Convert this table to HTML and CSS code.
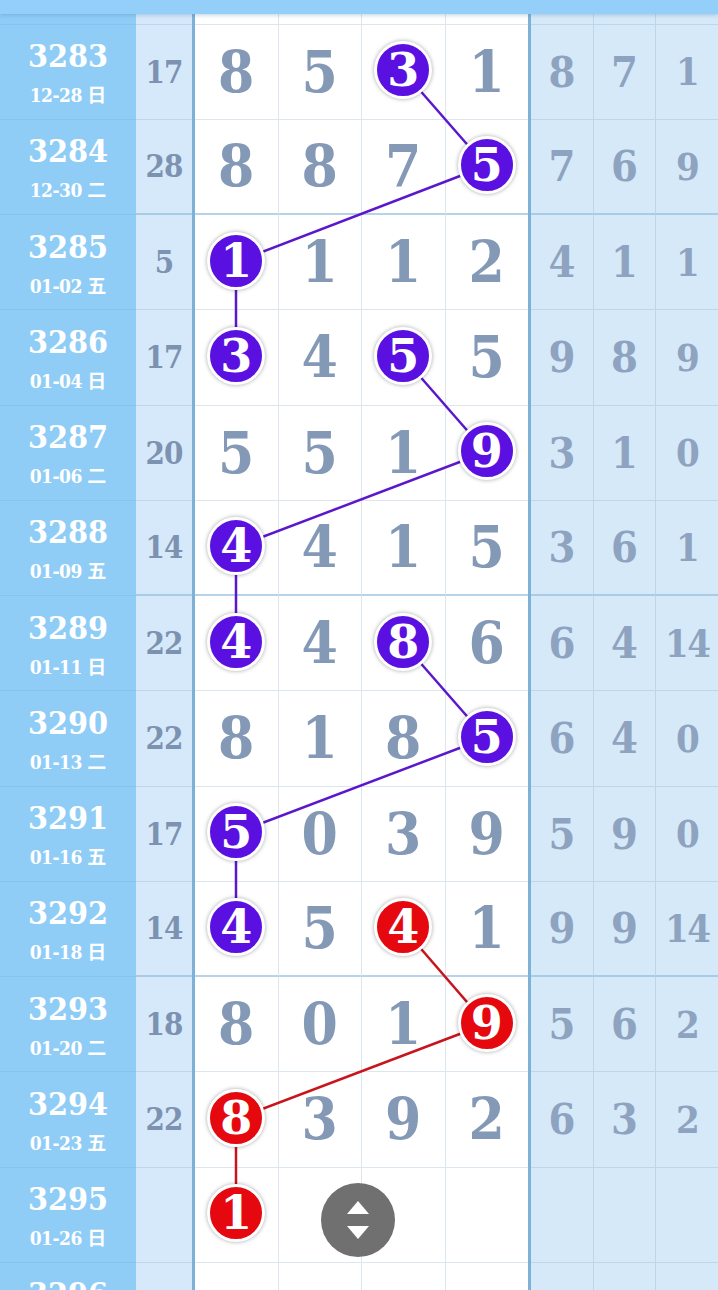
FILE: index.html
```html
<!DOCTYPE html>
<html lang="zh-CN">
<head>
  <meta charset="UTF-8">
  <meta name="viewport" content="width=device-width, initial-scale=1.0">
  <title>走势图</title>
  <link rel="stylesheet" href="styles.css">
</head>
<body>
  <div class="topbar"></div>

  <div class="board">
    <div class="row stub">
      <div class="period"></div><div class="sum"></div>
      <div class="main"><span></span><span></span><span></span><span></span></div>
      <div class="side"><span></span><span></span><span></span></div>
    </div>

    <div class="row">
      <div class="period"><b>3283</b><small>12-28 <i>日</i></small></div>
      <div class="sum">17</div>
      <div class="main"><span>8</span><span>5</span><span><em class="ball">3</em></span><span>1</span></div>
      <div class="side"><span>8</span><span>7</span><span>1</span></div>
    </div>
    <div class="row group-end">
      <div class="period"><b>3284</b><small>12-30 <i>二</i></small></div>
      <div class="sum">28</div>
      <div class="main"><span>8</span><span>8</span><span>7</span><span><em class="ball">5</em></span></div>
      <div class="side"><span>7</span><span>6</span><span>9</span></div>
    </div>
    <div class="row">
      <div class="period"><b>3285</b><small>01-02 <i>五</i></small></div>
      <div class="sum">5</div>
      <div class="main"><span><em class="ball">1</em></span><span>1</span><span>1</span><span>2</span></div>
      <div class="side"><span>4</span><span>1</span><span>1</span></div>
    </div>
    <div class="row">
      <div class="period"><b>3286</b><small>01-04 <i>日</i></small></div>
      <div class="sum">17</div>
      <div class="main"><span><em class="ball">3</em></span><span>4</span><span><em class="ball">5</em></span><span>5</span></div>
      <div class="side"><span>9</span><span>8</span><span>9</span></div>
    </div>
    <div class="row">
      <div class="period"><b>3287</b><small>01-06 <i>二</i></small></div>
      <div class="sum">20</div>
      <div class="main"><span>5</span><span>5</span><span>1</span><span><em class="ball">9</em></span></div>
      <div class="side"><span>3</span><span>1</span><span>0</span></div>
    </div>
    <div class="row group-end">
      <div class="period"><b>3288</b><small>01-09 <i>五</i></small></div>
      <div class="sum">14</div>
      <div class="main"><span><em class="ball">4</em></span><span>4</span><span>1</span><span>5</span></div>
      <div class="side"><span>3</span><span>6</span><span>1</span></div>
    </div>
    <div class="row">
      <div class="period"><b>3289</b><small>01-11 <i>日</i></small></div>
      <div class="sum">22</div>
      <div class="main"><span><em class="ball">4</em></span><span>4</span><span><em class="ball">8</em></span><span>6</span></div>
      <div class="side"><span>6</span><span>4</span><span>14</span></div>
    </div>
    <div class="row">
      <div class="period"><b>3290</b><small>01-13 <i>二</i></small></div>
      <div class="sum">22</div>
      <div class="main"><span>8</span><span>1</span><span>8</span><span><em class="ball">5</em></span></div>
      <div class="side"><span>6</span><span>4</span><span>0</span></div>
    </div>
    <div class="row">
      <div class="period"><b>3291</b><small>01-16 <i>五</i></small></div>
      <div class="sum">17</div>
      <div class="main"><span><em class="ball">5</em></span><span>0</span><span>3</span><span>9</span></div>
      <div class="side"><span>5</span><span>9</span><span>0</span></div>
    </div>
    <div class="row group-end">
      <div class="period"><b>3292</b><small>01-18 <i>日</i></small></div>
      <div class="sum">14</div>
      <div class="main"><span><em class="ball">4</em></span><span>5</span><span><em class="ball red">4</em></span><span>1</span></div>
      <div class="side"><span>9</span><span>9</span><span>14</span></div>
    </div>
    <div class="row">
      <div class="period"><b>3293</b><small>01-20 <i>二</i></small></div>
      <div class="sum">18</div>
      <div class="main"><span>8</span><span>0</span><span>1</span><span><em class="ball red">9</em></span></div>
      <div class="side"><span>5</span><span>6</span><span>2</span></div>
    </div>
    <div class="row">
      <div class="period"><b>3294</b><small>01-23 <i>五</i></small></div>
      <div class="sum">22</div>
      <div class="main"><span><em class="ball red">8</em></span><span>3</span><span>9</span><span>2</span></div>
      <div class="side"><span>6</span><span>3</span><span>2</span></div>
    </div>
    <div class="row">
      <div class="period"><b>3295</b><small>01-26 <i>日</i></small></div>
      <div class="sum"></div>
      <div class="main"><span><em class="ball red">1</em></span><span></span><span></span><span></span></div>
      <div class="side"><span></span><span></span><span></span></div>
    </div>
    <div class="row">
      <div class="period"><b>3296</b><small>01-28 <i>二</i></small></div>
      <div class="sum"></div>
      <div class="main"><span></span><span></span><span></span><span></span></div>
      <div class="side"><span></span><span></span><span></span></div>
    </div>

    <!-- trend lines between the drawn balls -->
    <svg class="links" width="718" height="1290" viewBox="0 0 718 1290">
      <g stroke="#5a17cc" stroke-width="2.5" fill="none">
        <line x1="403" y1="71" x2="486" y2="166"/>
        <line x1="486" y1="166" x2="236" y2="262"/>
        <line x1="236" y1="262" x2="236" y2="357"/>
        <line x1="403" y1="357" x2="486" y2="452"/>
        <line x1="486" y1="452" x2="236" y2="547"/>
        <line x1="236" y1="547" x2="236" y2="643"/>
        <line x1="403" y1="643" x2="486" y2="738"/>
        <line x1="486" y1="738" x2="236" y2="833"/>
        <line x1="236" y1="833" x2="236" y2="928"/>
      </g>
      <g stroke="#c8141c" stroke-width="2.5" fill="none">
        <line x1="403" y1="928" x2="486" y2="1024"/>
        <line x1="486" y1="1024" x2="236" y2="1119"/>
        <line x1="236" y1="1119" x2="236" y2="1214"/>
      </g>
    </svg>
  </div>

  <button class="scroll-btn" type="button" aria-label="滚动">
    <svg width="24" height="38" viewBox="0 0 24 38">
      <polygon points="12,0 23,13 1,13" fill="#fff"/>
      <polygon points="1,25 23,25 12,38" fill="#fff"/>
    </svg>
  </button>
</body>
</html>
```

FILE: styles.css
```css
body {
  margin: 0;
  width: 718px;
  height: 1290px;
  overflow: hidden;
  background: #fff;
  font-family: 'DejaVu Serif', 'Liberation Serif', serif;
  font-weight: bold;
  font-stretch: condensed;
}

.topbar {
  position: relative;
  z-index: 3;
  height: 14px;
  background: #93cff8;
  box-shadow: 0 1px 4px rgba(60, 120, 170, 0.35);
}

.board {
  position: relative;
}

.row {
  display: flex;
  height: 95.25px;
}

.row.stub {
  height: 10.5px;
}

.period {
  width: 136px;
  flex: none;
  background: #8fcdf7;
  border-bottom: 1px solid #86c4ef;
  box-sizing: border-box;
  color: #fff;
  display: flex;
  flex-direction: column;
  align-items: center;
  justify-content: center;
  padding-top: 8px;
}

.period b {
  font-size: 32px;
  line-height: 38px;
}

.period small {
  font-size: 19px;
  line-height: 38px;
  letter-spacing: -0.5px;
}

.period i {
  font-style: normal;
  font-family: 'Noto Sans CJK SC', sans-serif;
  font-weight: bold;
  font-size: 19px;
  letter-spacing: 0;
}

.sum {
  width: 56px;
  flex: none;
  background: #d5e9fa;
  border-bottom: 1px solid #bcd6ec;
  box-sizing: border-box;
  color: #7d92b0;
  font-size: 31px;
  letter-spacing: -1px;
  display: flex;
  align-items: center;
  justify-content: center;
}

.main {
  width: 339px;
  flex: none;
  display: flex;
  box-sizing: border-box;
  border-left: 3px solid #7eb1d6;
  border-right: 3px solid #7eb1d6;
  background: #fff;
}

.main span {
  flex: 1;
  border-right: 1px solid #dde5ee;
  border-bottom: 1px solid #dde5ee;
  display: flex;
  align-items: center;
  justify-content: center;
  font-size: 58px;
  color: #8499b6;
}

.main span:last-child {
  border-right: none;
}

.side {
  flex: 1;
  display: flex;
  background: #d6e9f9;
}

.side span {
  flex: 1;
  border-right: 1px solid #bcd6ec;
  border-bottom: 1px solid #bcd6ec;
  display: flex;
  align-items: center;
  justify-content: center;
  font-size: 43px;
  color: #8ea3c0;
}

.side span:last-child {
  border-right: none;
  font-size: 38px;
  letter-spacing: -1.5px;
}

.group-end .main span {
  border-bottom: 2px solid #b6d3ea;
}

.group-end .side span,
.group-end .sum {
  border-bottom: 2px solid #a9cbe6;
}

.ball {
  position: relative;
  z-index: 2;
  width: 52px;
  height: 52px;
  border: 3px solid #fff;
  border-radius: 50%;
  background: #5b10e2;
  box-shadow: 0 0 4px rgba(0, 0, 0, 0.35);
  color: #fff;
  font-style: normal;
  font-size: 46px;
  font-stretch: normal;
  line-height: 52px;
  text-align: center;
  margin-top: -3px;
}

.ball.red {
  background: #e5090f;
}

.links {
  position: absolute;
  left: 0;
  top: -14px;
  z-index: 1;
  pointer-events: none;
}

.scroll-btn {
  position: fixed;
  left: 321px;
  top: 1183px;
  z-index: 4;
  width: 74px;
  height: 74px;
  border: none;
  border-radius: 50%;
  background: #707070;
  padding: 0;
  display: flex;
  align-items: center;
  justify-content: center;
}
```
